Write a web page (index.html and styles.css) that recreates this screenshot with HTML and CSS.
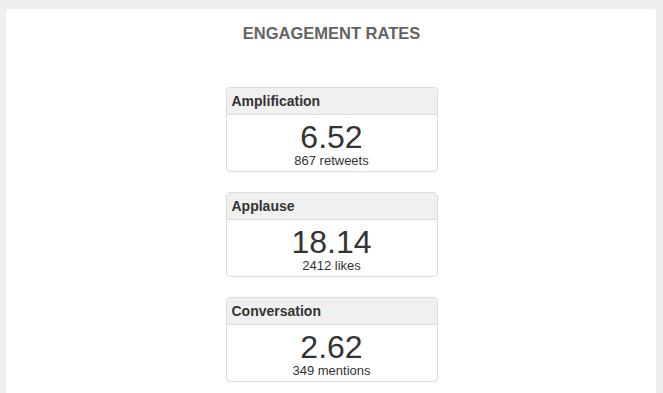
FILE: index.html
```html
<!DOCTYPE html>
<html lang="en">
<head>
  <meta charset="UTF-8">
  <title>Engagement Rates</title>
  <link rel="stylesheet" href="styles.css">
</head>
<body>
  <div class="panel">
    <h2 class="panel-title">ENGAGEMENT RATES</h2>

    <div class="rate-card">
      <div class="rate-head">Amplification</div>
      <div class="rate-body">
        <div class="rate-value">6.52</div>
        <div class="rate-sub">867 retweets</div>
      </div>
    </div>

    <div class="rate-card">
      <div class="rate-head">Applause</div>
      <div class="rate-body">
        <div class="rate-value">18.14</div>
        <div class="rate-sub">2412 likes</div>
      </div>
    </div>

    <div class="rate-card">
      <div class="rate-head">Conversation</div>
      <div class="rate-body">
        <div class="rate-value">2.62</div>
        <div class="rate-sub">349 mentions</div>
      </div>
    </div>
  </div>
</body>
</html>
```

FILE: styles.css
```css
body { margin: 0; background: #efefef; font-family: "Liberation Sans", Arial, sans-serif; color: #333; }
.panel { margin: 9px 7px 0 6px; background: #fff; border-radius: 3px; padding: 14px 0 40px 1px; min-height: 400px; }
.panel-title { margin: 0 0 44px; font-size: 16.5px; line-height: 20px; font-weight: bold; color: #636363; text-align: center; }
.rate-card { width: 210px; margin: 0 auto 20px; border: 1px solid #dcdcdc; border-radius: 4px; overflow: hidden; }
.rate-head { background: #f0f0f0; border-bottom: 1px solid #dcdcdc; padding: 3px 5px; font-size: 14px; line-height: 20px; font-weight: bold; color: #333; }
.rate-body { padding: 6px 0 2px; text-align: center; }
.rate-value { font-size: 32px; line-height: 32px; color: #333; }
.rate-sub { font-size: 13px; line-height: 16px; color: #333; }
```
